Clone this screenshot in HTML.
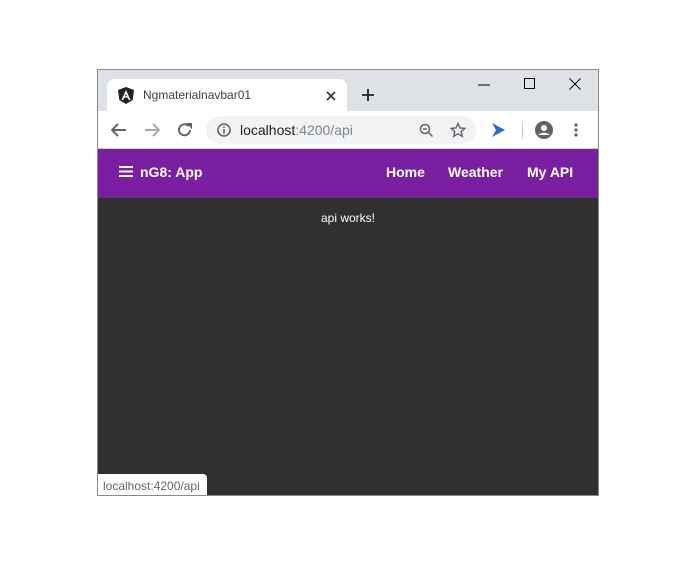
<!DOCTYPE html>
<html><head><meta charset="utf-8"><style>
*{margin:0;padding:0;box-sizing:border-box}
body{width:696px;height:564px;background:#fff;position:relative;font-family:"Liberation Sans",sans-serif;overflow:hidden}
#win{position:absolute;left:97px;top:69px;width:502px;height:427px;border:1px solid #8a8a8a;background:#303030;overflow:hidden}
#tabs{position:absolute;left:0;top:0;width:100%;height:41px;background:#dee1e6}
#tab{position:absolute;left:9px;top:9px;width:240px;height:32px;background:#fff;border-radius:8px 8px 0 0}
#tab .t{position:absolute;left:36px;top:9px;font-size:12px;color:#3c4043}
#bar{position:absolute;left:0;top:41px;width:100%;height:38px;background:#fff;border-bottom:1px solid #ccc}
#omni{position:absolute;left:108px;top:5px;width:270px;height:28px;background:#f1f3f4;border-radius:14px}
#omni .u{position:absolute;left:34px;top:6px;font-size:14px;color:#202124}
#omni .u span{color:#80868b}
#nav{position:absolute;left:0;top:79px;width:100%;height:49px;background:#7b1fa2;color:#fff;font-weight:bold;font-size:14px}
#nav span{position:absolute;top:15px}
#msg{position:absolute;top:141px;left:0;width:100%;text-align:center;color:#fff;font-size:12px}
#status{position:absolute;left:0;top:404px;width:109px;height:22px;background:#fff;border-radius:0 4px 0 0;font-size:12px;color:#666;padding:5px 0 0 5px}
svg{position:absolute}
</style></head><body>
<div id="win">
 <div id="tabs">
  <div id="tab">
   <svg style="left:11px;top:8px" width="16" height="17" viewBox="0 0 16 17"><path d="M8 0L0 3l1.3 10L8 17l6.7-4L16 3z" fill="#222"/><path d="M8 3L3.5 13h1.7l1-2.4h3.6l1 2.4h1.7zM7 9.2L8 6.8l1 2.4z" fill="#fff"/></svg>
   <div class="t">Ngmaterialnavbar01</div>
   <svg style="left:219px;top:12px" width="10" height="10"><path d="M1 1l8 8M9 1l-8 8" stroke="#333" stroke-width="1.6"/></svg>
  </div>
  <svg style="left:263px;top:18px" width="14" height="14"><path d="M7 1v12M1 7h12" stroke="#222" stroke-width="1.8"/></svg>
  <svg style="left:380px;top:14px" width="12" height="2"><path d="M0 1h12" stroke="#000"/></svg>
  <svg style="left:426px;top:8px" width="12" height="12"><rect x=".5" y=".5" width="10" height="10" fill="none" stroke="#000"/></svg>
  <svg style="left:471px;top:8px" width="12" height="12"><path d="M.5 .5l11 11M11.5 .5l-11 11" stroke="#000"/></svg>
 </div>
 <div id="bar">
  <svg style="left:13px;top:12px" width="16" height="14"><path d="M15 7H2M7 1L1 7l6 6" fill="none" stroke="#5f6368" stroke-width="2"/></svg>
  <svg style="left:46px;top:12px" width="16" height="14"><path d="M1 7h13M9 1l6 6-6 6" fill="none" stroke="#aaa" stroke-width="2"/></svg>
  <svg style="left:79px;top:11px" width="16" height="16"><path d="M13 8A5.5 5.5 0 1 1 11.5 4" fill="none" stroke="#5f6368" stroke-width="2"/><path d="M9 1h6v6z" fill="#5f6368"/></svg>
  <div id="omni">
   <svg style="left:11px;top:7px" width="14" height="14"><circle cx="7" cy="7" r="6" fill="none" stroke="#5f6368" stroke-width="1.5"/><path d="M7 6v5M7 3.5v1.5" stroke="#5f6368" stroke-width="1.5"/></svg>
   <div class="u">localhost<span>:4200/api</span></div>
   <svg style="left:213px;top:7px" width="15" height="15"><circle cx="6" cy="6" r="4.5" fill="none" stroke="#5f6368" stroke-width="1.5"/><path d="M9.5 9.5l4 4M4 6h4" stroke="#5f6368" stroke-width="1.5"/></svg>
   <svg style="left:244px;top:6px" width="16" height="16"><path d="M8 1.5l2 4.5 4.8.4-3.6 3.2 1.1 4.7L8 11.8l-4.3 2.5 1.1-4.7L1.2 6.4 6 6z" fill="none" stroke="#5f6368" stroke-width="1.4"/></svg>
  </div>
  <svg style="left:393px;top:11px" width="15" height="16"><path d="M1 1l13 7-13 7 4-7z" fill="#2a6bc4"/></svg>
  <div style="position:absolute;left:424px;top:10px;width:1px;height:18px;background:#ccc"></div>
  <svg style="left:437px;top:10px" width="18" height="18"><circle cx="9" cy="9" r="9" fill="#5f6368"/><circle cx="9" cy="7" r="3" fill="#fff"/><path d="M3.5 14c2-3 9-3 11 0" fill="#fff"/></svg>
  <svg style="left:476px;top:12px" width="4" height="16"><circle cx="2" cy="2" r="1.6" fill="#5f6368"/><circle cx="2" cy="7" r="1.6" fill="#5f6368"/><circle cx="2" cy="12" r="1.6" fill="#5f6368"/></svg>
 </div>
 <div id="nav">
  <svg style="left:21px;top:17px" width="14" height="11"><path d="M0 1h14M0 5.5h14M0 10h14" stroke="#fff" stroke-width="2"/></svg>
  <span style="left:42px">nG8: App</span>
  <span style="left:288px">Home</span>
  <span style="left:350px">Weather</span>
  <span style="left:429px">My API</span>
 </div>
 <div id="msg">api works!</div>
 <div id="status">localhost:4200/api</div>
</div>
</body></html>
